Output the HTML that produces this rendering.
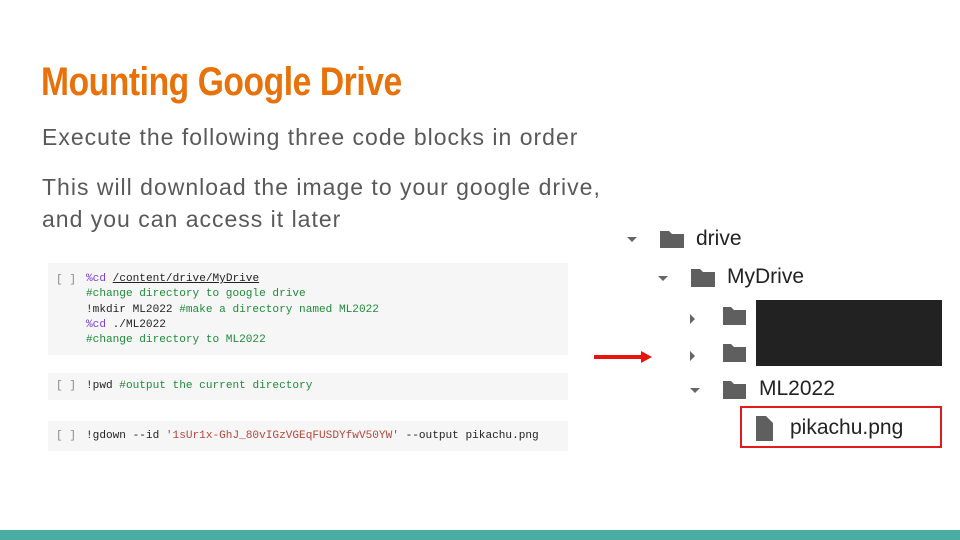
<html><head><style>
body{margin:0;width:960px;height:540px;background:#fff;position:relative;overflow:hidden;font-family:"Liberation Sans",sans-serif}
.a{position:absolute}
h1{position:absolute;left:41px;top:60px;margin:0;font:bold 40px "Liberation Sans Narrow","Liberation Sans",sans-serif;color:#e8710a;letter-spacing:-0.5px;transform:scaleX(0.84);transform-origin:left;white-space:nowrap}
.p{position:absolute;left:42px;color:#595959;font-size:23px;line-height:32px;letter-spacing:1px;white-space:nowrap}
.code{position:absolute;left:48px;width:520px;background:#f6f6f6;font:11.1px/15.3px "Liberation Mono",monospace;color:#222}
.code .b{position:absolute;left:8px;color:#888}
.code .t{position:absolute;left:38px;white-space:pre}
.g{color:#1f8a3a}.m{color:#7b3fd0}.r{color:#b5473a}
.tri{position:absolute;width:0;height:0}
.tx{position:absolute;font-size:21px;color:#222}
</style></head><body>
<h1>Mounting Google Drive</h1>
<div class="p" style="top:121px">Execute the following three code blocks in order</div>
<div class="p" style="top:171px">This will download the image to your google drive,<br>and you can access it later</div>

<div class="code" style="top:263px;height:92px"><span class="b" style="top:10px">[ ]</span><div class="t" style="top:9px"><span class="m">%cd</span> <u>/content/drive/MyDrive</u>
<span class="g">#change directory to google drive</span>
!mkdir ML2022 <span class="g">#make a directory named ML2022</span>
<span class="m">%cd</span> ./ML2022
<span class="g">#change directory to ML2022</span></div></div>
<div class="code" style="top:373px;height:27px"><span class="b" style="top:6px">[ ]</span><div class="t" style="top:6px">!pwd <span class="g">#output the current directory</span></div></div>
<div class="code" style="top:421px;height:30px"><span class="b" style="top:8px">[ ]</span><div class="t" style="top:8px">!gdown --id <span class="r">'1sUr1x-GhJ_80vIGzVGEqFUSDYfwV50YW'</span> --output pikachu.png</div></div>

<div class="a" style="left:594px;top:355px;width:48px;height:4px;background:#e8150f"></div>
<div class="tri" style="left:641px;top:351px;border-left:11px solid #e8150f;border-top:6px solid transparent;border-bottom:6px solid transparent"></div>

<svg class="a" style="left:590px;top:220px" width="370" height="240">
<g fill="#666">
<path d="M37 17l10 0-5 5z"/><path d="M68 56l10 0-5 5z"/><path d="M100 94l5 5-5 5z"/><path d="M100 131l5 5-5 5z"/><path d="M100 168l10 0-5 5z"/>
<g fill="#5f5f5f">
<path d="M70 11h9l3 3h12v14h-24z"/>
<path d="M101 49h9l3 3h12v15h-24z"/>
<path d="M133 87h8l3 3h12v15h-23z"/>
<path d="M133 124h8l3 3h12v15h-23z"/>
<path d="M133 161h8l3 3h12v15h-23z"/>
<path d="M166 196h10l7 7v18h-17z"/>
</g></g>
<rect x="166" y="80" width="186" height="66" fill="#222"/>
<rect x="151" y="187" width="200" height="40" fill="none" stroke="#e21c1c" stroke-width="2"/>
</svg>
<div class="tx" style="left:696px;top:227px">drive</div>
<div class="tx" style="left:727px;top:265px">MyDrive</div>
<div class="tx" style="left:759px;top:377px">ML2022</div>
<div class="tx" style="left:790px;top:416px">pikachu.png</div>

<div class="a" style="left:0;top:530px;width:960px;height:10px;background:#4aada3"></div>
</body></html>
